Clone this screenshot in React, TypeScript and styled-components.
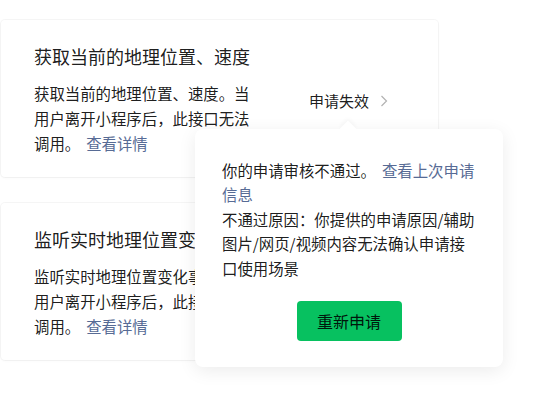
import React from "react";
import styled, { createGlobalStyle } from "styled-components";

const Global = createGlobalStyle`
  html, body {
    margin: 0;
    padding: 0;
    background: #ffffff;
    font-family: "Noto Sans CJK SC", "Noto Sans", sans-serif;
    color: rgba(0, 0, 0, 0.9);
  }
`;

const Page = styled.div`
  position: relative;
  width: 540px;
  height: 397px;
  overflow: hidden;
  padding: 20px 0 0 1px;
  box-sizing: border-box;
  display: flex;
  flex-direction: column;
  gap: 26px;
`;

const Card = styled.div`
  width: 437px;
  height: 157px;
  box-sizing: border-box;
  padding: 23px 50px 21px 33px;
  background: #fff;
  border-radius: 4px;
  box-shadow: 0 0 0 1px rgba(0, 0, 0, 0.035), 0 1px 3px rgba(0, 0, 0, 0.03);
  display: flex;
  align-items: center;
  justify-content: space-between;
`;

const Info = styled.div`
  width: 220px;
  align-self: flex-start;
`;

const Title = styled.div`
  font-size: 18px;
  line-height: 26px;
  white-space: nowrap;
  margin-bottom: 12px;
`;

const Desc = styled.div`
  font-size: 15.4px;
  line-height: 25px;
`;

const Link = styled.a`
  color: #576b95;
  text-decoration: none;
  margin-left: 6px;
  cursor: pointer;
`;

const Status = styled.div`
  display: flex;
  align-items: center;
  gap: 11px;
  font-size: 15px;
  line-height: 20px;
  margin-top: 2px;
`;

const Popover = styled.div`
  position: absolute;
  left: 195px;
  top: 129px;
  width: 308px;
  height: 238px;
  box-sizing: border-box;
  padding: 29px 27px 26px 27px;
  background: #fff;
  border-radius: 8px;
  box-shadow: 0 4px 18px rgba(0, 0, 0, 0.08);
  display: flex;
  flex-direction: column;
  font-size: 15.4px;
  line-height: 24.4px;
  &::before {
    content: "";
    position: absolute;
    top: -6px;
    left: 147px;
    width: 12px;
    height: 12px;
    background: #fff;
    transform: rotate(45deg);
    box-shadow: -2px -2px 4px rgba(0, 0, 0, 0.03);
  }
`;

const PopText = styled.p`
  margin: 0;
  position: relative;
`;

const Retry = styled.button`
  align-self: center;
  margin-top: auto;
  width: 105px;
  height: 40px;
  border: none;
  border-radius: 4px;
  background: #07c160;
  color: rgba(0, 0, 0, 0.9);
  font-family: inherit;
  font-size: 16px;
`;

const Chevron = () => (
  <svg width="8" height="12" viewBox="0 0 8 12" fill="none">
    <path d="M1.5 1L6.5 6L1.5 11" stroke="#b2b2b2" strokeWidth="1.2" />
  </svg>
);

const items = [
  {
    title: "获取当前的地理位置、速度",
    desc: "获取当前的地理位置、速度。当用户离开小程序后，此接口无法调用。",
  },
  {
    title: "监听实时地理位置变化事件",
    desc: "监听实时地理位置变化事件。当用户离开小程序后，此接口无法调用。",
  },
];

export default function App() {
  return (
    <>
      <Global />
      <Page>
        {items.map((it) => (
          <Card key={it.title}>
            <Info>
              <Title>{it.title}</Title>
              <Desc>
                {it.desc}
                <Link>查看详情</Link>
              </Desc>
            </Info>
            <Status>
              申请失效
              <Chevron />
            </Status>
          </Card>
        ))}
        <Popover>
          <PopText>
            你的申请审核不通过。<Link>查看上次申请信息</Link>
          </PopText>
          <PopText>
            不通过原因：你提供的申请原因/辅助图片/网页/视频内容无法确认申请接
            <br />
            口使用场景
          </PopText>
          <Retry>重新申请</Retry>
        </Popover>
      </Page>
    </>
  );
}
